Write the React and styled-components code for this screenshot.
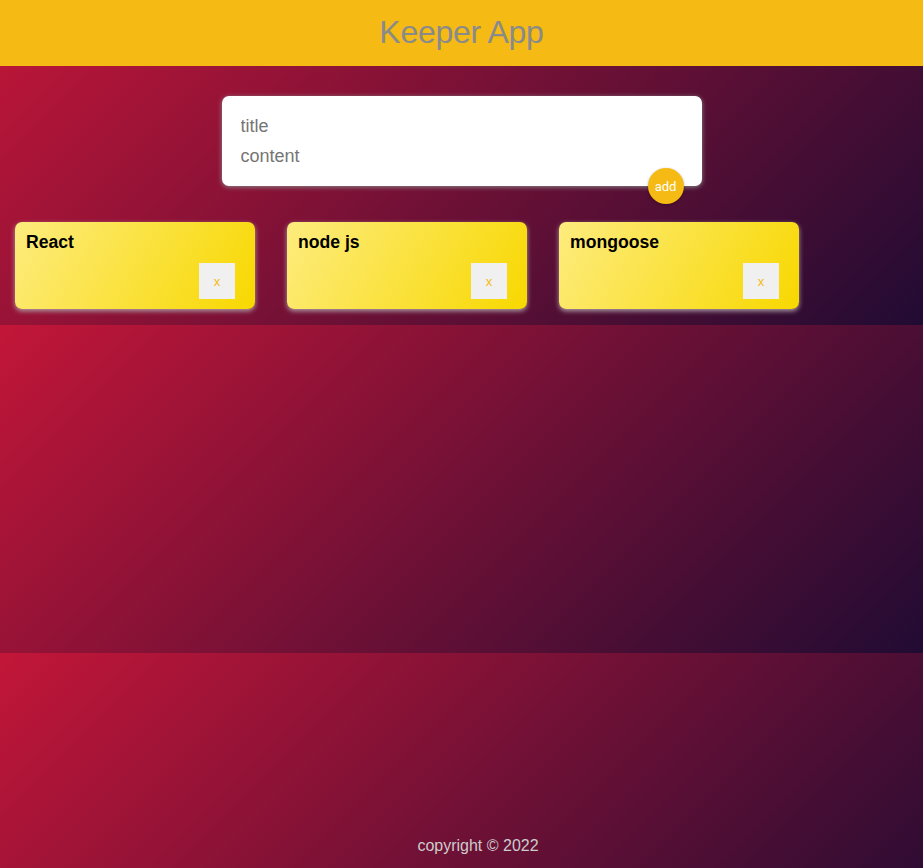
import React from "react";
import styled, { createGlobalStyle } from "styled-components";

const GlobalStyle = createGlobalStyle`
  * { box-sizing: border-box; }
  html, body { margin: 0; padding: 0; }
  body { font-family: "Liberation Sans", Arial, sans-serif; }
`;

const Page = styled.div`
  min-height: 100vh;
  display: flex;
  flex-direction: column;
  background-image: linear-gradient(135deg, #c21638, #210b33);
  background-size: 100% 328px;
  background-position: 0 -3px;
  background-repeat: repeat;
`;

const Header = styled.header`
  height: 66px;
  background: #f5ba13;
  display: flex;
  align-items: center;
  justify-content: center;
`;

const Title = styled.h1`
  margin: 0 0 2px;
  color: #8a8a8a;
  font-size: 32px;
  font-weight: 400;
  letter-spacing: -0.3px;
`;

const Form = styled.form`
  position: relative;
  width: 480px;
  margin: 30px auto 36px;
  padding: 15px;
  background: #fff;
  border-radius: 7px;
  box-shadow: 0 1px 5px rgb(138, 137, 137);
`;

const Input = styled.input`
  display: block;
  width: 100%;
  height: 30px;
  border: none;
  outline: none;
  padding: 4px;
  font-size: 18px;
  font-family: "Liberation Sans", Arial, sans-serif;
  color: #555;
  background: transparent;
  &::placeholder { color: #757575; }
`;

const AddButton = styled.button`
  position: absolute;
  right: 18px;
  bottom: -18px;
  width: 36px;
  height: 36px;
  border-radius: 50%;
  border: none;
  background: #f5ba13;
  color: #fff;
  font-family: Roboto, sans-serif;
  font-size: 13px;
  padding: 0;
  box-shadow: 0 1px 3px rgba(0, 0, 0, 0.3);
`;

const Notes = styled.div`
  display: flex;
  flex-wrap: wrap;
  gap: 32px;
  padding: 0 15px;
`;

const Card = styled.div`
  width: 240px;
  padding: 10px 10px 10px 11px;
  display: flex;
  flex-direction: column;
  border-radius: 7px;
  background: linear-gradient(120deg, #fdec7e, #f8d800);
  box-shadow: 0 2px 5px #b0a0a8;
`;

const NoteTitle = styled.h1`
  margin: 0;
  font-size: 17.6px;
  line-height: 20px;
  font-weight: 700;
  color: #000;
`;

const DeleteButton = styled.button`
  align-self: flex-end;
  margin: 11px 10px 0 0;
  width: 36px;
  height: 36px;
  border: none;
  padding: 0;
  background: #f0f0f0;
  color: #f5ba13;
  font-family: "Liberation Sans", Arial, sans-serif;
  font-size: 13px;
`;

const Footer = styled.footer`
  margin-top: auto;
  text-align: center;
  color: #cccccc;
  font-size: 16px;
  line-height: 18px;
  padding: 0 0 13px 33px;
`;

const notes = ["React", "node js", "mongoose"];

export default function App() {
  return (
    <>
      <GlobalStyle />
      <Page>
        <Header>
          <Title>Keeper App</Title>
        </Header>
        <Form onSubmit={(e) => e.preventDefault()}>
          <Input placeholder="title" />
          <Input placeholder="content" />
          <AddButton type="submit">add</AddButton>
        </Form>
        <Notes>
          {notes.map((n) => (
            <Card key={n}>
              <NoteTitle>{n}</NoteTitle>
              <DeleteButton>x</DeleteButton>
            </Card>
          ))}
        </Notes>
        <Footer>copyright © 2022</Footer>
      </Page>
    </>
  );
}
